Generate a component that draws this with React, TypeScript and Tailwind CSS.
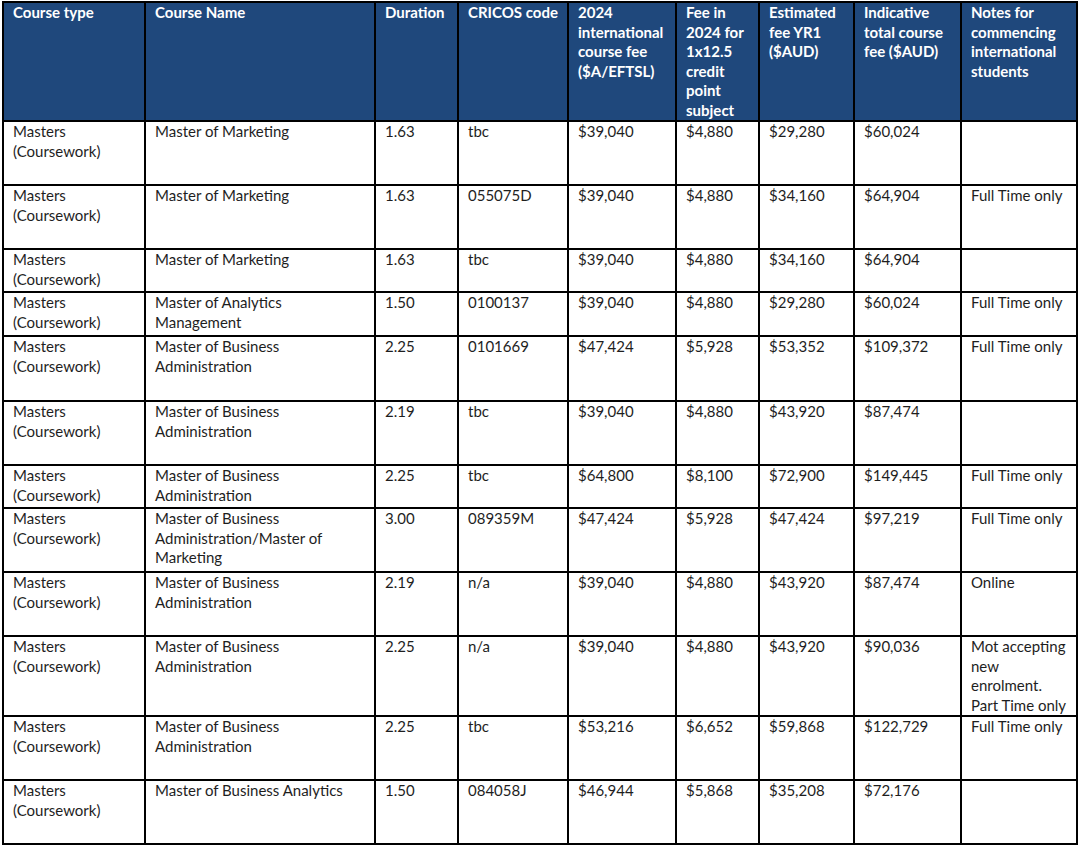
import React from "react";

type Row = { h: number; name: React.ReactNode; dur: string; code: string; fee: string; sub: string; yr1: string; total: string; notes: React.ReactNode };

const MBA = (<>Master of Business<br />Administration</>);

const rows: Row[] = [
  { h: 64, name: "Master of Marketing", dur: "1.63", code: "tbc", fee: "$39,040", sub: "$4,880", yr1: "$29,280", total: "$60,024", notes: "" },
  { h: 64, name: "Master of Marketing", dur: "1.63", code: "055075D", fee: "$39,040", sub: "$4,880", yr1: "$34,160", total: "$64,904", notes: "Full Time only" },
  { h: 43, name: "Master of Marketing", dur: "1.63", code: "tbc", fee: "$39,040", sub: "$4,880", yr1: "$34,160", total: "$64,904", notes: "" },
  { h: 44, name: <>Master of Analytics<br />Management</>, dur: "1.50", code: "0100137", fee: "$39,040", sub: "$4,880", yr1: "$29,280", total: "$60,024", notes: "Full Time only" },
  { h: 65, name: MBA, dur: "2.25", code: "0101669", fee: "$47,424", sub: "$5,928", yr1: "$53,352", total: "$109,372", notes: "Full Time only" },
  { h: 64, name: MBA, dur: "2.19", code: "tbc", fee: "$39,040", sub: "$4,880", yr1: "$43,920", total: "$87,474", notes: "" },
  { h: 43, name: MBA, dur: "2.25", code: "tbc", fee: "$64,800", sub: "$8,100", yr1: "$72,900", total: "$149,445", notes: "Full Time only" },
  { h: 64, name: <>Master of Business<br />Administration/Master of<br />Marketing</>, dur: "3.00", code: "089359M", fee: "$47,424", sub: "$5,928", yr1: "$47,424", total: "$97,219", notes: "Full Time only" },
  { h: 64, name: MBA, dur: "2.19", code: "n/a", fee: "$39,040", sub: "$4,880", yr1: "$43,920", total: "$87,474", notes: "Online" },
  { h: 80, name: MBA, dur: "2.25", code: "n/a", fee: "$39,040", sub: "$4,880", yr1: "$43,920", total: "$90,036", notes: <>Mot accepting<br />new<br />enrolment.<br />Part Time only</> },
  { h: 64, name: MBA, dur: "2.25", code: "tbc", fee: "$53,216", sub: "$6,652", yr1: "$59,868", total: "$122,729", notes: "Full Time only" },
  { h: 64, name: "Master of Business Analytics", dur: "1.50", code: "084058J", fee: "$46,944", sub: "$5,868", yr1: "$35,208", total: "$72,176", notes: "" },
];

const widths = [142, 230, 83, 110, 108, 83, 95, 107, 116];

const headers: React.ReactNode[] = [
  "Course type",
  "Course Name",
  "Duration",
  "CRICOS code",
  <>2024<br />international<br />course fee<br />($A/EFTSL)</>,
  <>Fee in<br />2024 for<br />1x12.5<br />credit<br />point<br />subject</>,
  <>Estimated<br />fee YR1<br />($AUD)</>,
  <>Indicative<br />total course<br />fee ($AUD)</>,
  <>Notes for<br />commencing<br />international<br />students</>,
];

const th = "border-2 border-black bg-[#1f487c] text-white font-bold align-top text-left pl-[9px] pr-0 pt-0 whitespace-nowrap";
const td = "border-2 border-black align-top text-left pl-[9px] pr-0 pt-0 whitespace-nowrap text-[#1e1e1e]";

export default function App() {
  return (
    <div className="w-[1080px] h-[847px] bg-white overflow-hidden pl-[2px] pt-[1px]" style={{ fontFamily: "Lato, 'Open Sans', sans-serif" }}>
      <table className="border-collapse table-fixed text-[15px] leading-[19.5px]" style={{ width: 1076 }}>
        <colgroup>
          {widths.map((w, i) => (
            <col key={i} style={{ width: w }} />
          ))}
        </colgroup>
        <thead>
          <tr className="h-[117px]">
            {headers.map((h, i) => (
              <th key={i} className={th}>{h}</th>
            ))}
          </tr>
        </thead>
        <tbody>
          {rows.map((r, i) => (
            <tr key={i} style={{ height: r.h }}>
              <td className={td}>Masters<br />(Coursework)</td>
              <td className={td}>{r.name}</td>
              <td className={td}>{r.dur}</td>
              <td className={td}>{r.code}</td>
              <td className={td}>{r.fee}</td>
              <td className={td}>{r.sub}</td>
              <td className={td}>{r.yr1}</td>
              <td className={td}>{r.total}</td>
              <td className={td}>{r.notes}</td>
            </tr>
          ))}
        </tbody>
      </table>
    </div>
  );
}
